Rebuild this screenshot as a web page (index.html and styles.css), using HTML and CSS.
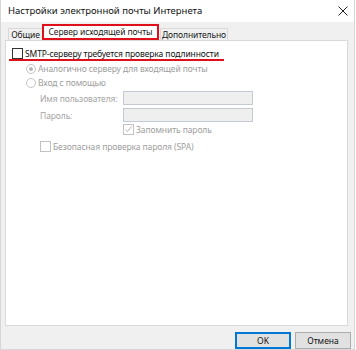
FILE: index.html
```html
<!DOCTYPE html>
<html lang="ru">
<head>
  <meta charset="UTF-8" />
  <title>Настройки электронной почты Интернета</title>
  <link rel="stylesheet" href="styles.css">
</head>
<body>
  <div class="dialog">
    <div class="titlebar">
      <span class="title">Настройки электронной почты Интернета</span>
      <svg class="close" width="10" height="10" viewBox="0 0 10 10">
        <path d="M0.5 0.5 L9.5 9.5 M9.5 0.5 L0.5 9.5" stroke="#222" stroke-width="1" fill="none"/>
      </svg>
    </div>

    <div class="tabs">
      <div class="tab first">Общие</div>
      <div class="tab active">Сервер исходящей почты</div>
      <div class="tab last">Дополнительно</div>
    </div>

    <div class="panel">
      <div class="row main-row">
        <span class="check"></span>
        <span class="label-main">SMTP-серверу требуется проверка подлинности</span>
      </div>

      <div class="row radio-row">
        <span class="radio on"></span>
        <span class="muted">Аналогично серверу для входящей почты</span>
      </div>
      <div class="row radio-row">
        <span class="radio"></span>
        <span class="muted">Вход с помощью</span>
      </div>

      <div class="field">
        <span class="field-label">Имя пользователя:</span>
        <span class="input"></span>
      </div>
      <div class="field">
        <span class="field-label">Пароль:</span>
        <span class="input"></span>
      </div>

      <div class="row remember-row">
        <span class="check light">
          <svg width="9" height="9" viewBox="0 0 9 9">
            <path d="M1.5 4.5 L3.5 6.5 L7.5 1.5" stroke="#b0b0b0" stroke-width="1" fill="none"/>
          </svg>
        </span>
        <span class="muted">Запомнить пароль</span>
      </div>
      <div class="row spa-row">
        <span class="check light"></span>
        <span class="muted">Безопасная проверка пароля (SPA)</span>
      </div>
    </div>

    <div class="footer">
      <button class="btn default">OK</button>
      <button class="btn">Отмена</button>
    </div>
  </div>
</body>
</html>
```

FILE: styles.css
```css
/* dialog frame */
body {
  margin: 0;
  font-family: 'Noto Sans', 'Open Sans', sans-serif;
  font-size: 8.5px;
  letter-spacing: -0.1px;
  color: #1a1a1a;
  background: #ffffff;
}
.dialog {
  width: 353px;
  height: 349px;
  border: 1px solid #d6d6d6;
  border-top: none;
  background: #f0f0f0;
  display: flex;
  flex-direction: column;
}
.titlebar {
  height: 22px;
  background: #ffffff;
  display: flex;
  align-items: center;
  justify-content: space-between;
  padding: 0 6px 0 7px;
}
.title {
  font-size: 9.5px;
  letter-spacing: 0;
  color: #111;
}

/* tabs */
.tabs {
  display: flex;
  align-items: flex-end;
  height: 19px;
  padding-left: 7px;
}
.tab {
  height: 11px;
  line-height: 11px;
  border: 1px solid #d9d9d9;
  border-bottom: none;
  background: #f0f0f0;
  text-align: center;
}
.tab.first {
  width: 33px;
}
.tab.active {
  width: 113px;
  height: 12px;
  line-height: 12px;
  margin-left: -1px;
  background: #ffffff;
  border: 2px solid #e0101a;
}
.tab.last {
  width: 66px;
  margin-left: 1px;
}

/* panel */
.panel {
  height: 281px;
  margin: 0 6px 0 4px;
  background: #ffffff;
  border: 1px solid #d9d9d9;
  padding-top: 7px;
}
.row {
  display: flex;
  align-items: center;
  height: 11px;
  gap: 1px;
}
.main-row {
  margin-left: 6px;
  position: relative;
}
.main-row::after {
  content: "";
  position: absolute;
  left: -3px;
  top: 11px;
  width: 215px;
  height: 2px;
  background: #e0101a;
}
.label-main {
  color: #111;
  margin-left: 1px;
}
.check {
  width: 9px;
  height: 9px;
  border: 1px solid #333;
  background: #fff;
  display: flex;
  align-items: center;
  justify-content: center;
}
.check.light {
  border-color: #c2c2c2;
}
.muted {
  color: #9e9e9e;
}
.radio-row {
  margin: 4px 0 0 20px;
  gap: 2px;
}
.radio-row + .radio-row {
  margin-top: 3px;
}
.radio {
  width: 8px;
  height: 8px;
  border: 1px solid #c4c4c4;
  border-radius: 50%;
  background: #fff;
  display: flex;
  align-items: center;
  justify-content: center;
}
.radio.on::after {
  content: "";
  width: 4px;
  height: 4px;
  border-radius: 50%;
  background: #b4b4b4;
}

/* text fields */
.field {
  display: flex;
  align-items: center;
  margin: 3px 0 0 34px;
}
.field-label {
  width: 83px;
  white-space: nowrap;
  color: #a4a4a4;
}
.input {
  width: 128px;
  height: 12px;
  background: #efefef;
  border: 1px solid #c3c9d3;
}
.remember-row {
  margin: 2px 0 0 117px;
}
.spa-row {
  margin: 6px 0 0 34px;
}
.remember-row .muted,
.spa-row .muted {
  margin-left: 1px;
}

/* buttons */
.footer {
  display: flex;
  justify-content: flex-end;
  gap: 4px;
  padding: 6px 3px 0 0;
}
.btn {
  width: 56px;
  height: 17px;
  padding: 0;
  font-family: inherit;
  font-size: 8.5px;
  color: #111;
  background: #e1e1e1;
  border: 1px solid #adadad;
}
.btn.default {
  border: 1px solid #0078d7;
  box-shadow: inset 0 0 0 1px #0078d7;
}
```
